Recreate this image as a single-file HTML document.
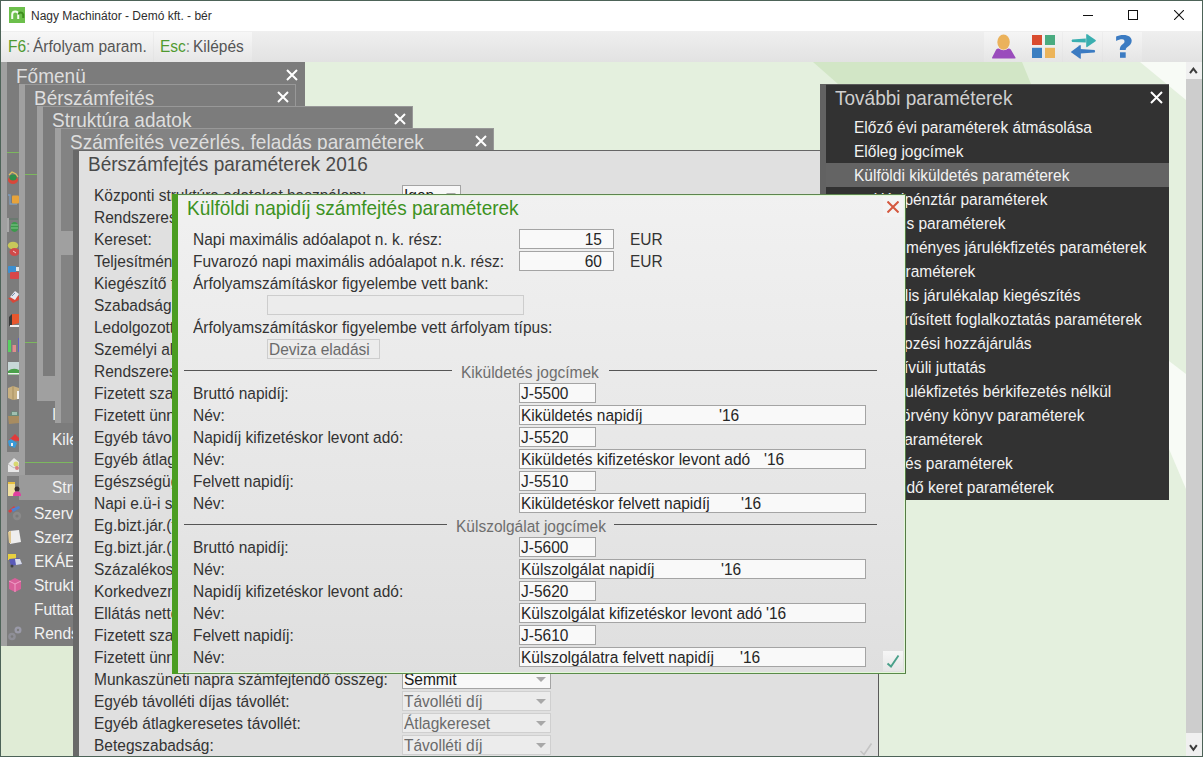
<!DOCTYPE html>
<html><head><meta charset="utf-8"><style>
html,body{margin:0;padding:0;}
body{width:1203px;height:757px;overflow:hidden;position:relative;background:#4d6358;font-family:"Liberation Sans", sans-serif;}
div,span,svg{position:absolute;}
.t{line-height:1;white-space:pre;}
.t span{position:static;}
</style></head><body>

<div style="left:1px;top:1px;width:1201px;height:30px;background:#ffffff"></div>
<svg style="left:9px;top:7px" width="16" height="16" viewBox="0 0 16 16"><rect x="0" y="0" width="16" height="16" fill="#6cbf4b"/><path d="M3.2 12V7.5a3 3 0 0 1 6 0V12" fill="none" stroke="#f4fbef" stroke-width="2"/><path d="M9.2 7.5a2.6 2.6 0 0 1 5 0V11" fill="none" stroke="#3f8f1f" stroke-width="2"/></svg>
<span class="t" style="left:31px;top:10px;font-size:12px;color:#2e2e2e;">Nagy Machinátor - Demó kft. - bér</span>
<div style="left:1083px;top:15px;width:10px;height:1px;background:#111"></div>
<div style="left:1128px;top:10px;width:8px;height:8px;border:1px solid #111"></div>
<svg style="left:1174px;top:10px" width="10" height="10" viewBox="0 0 10 10"><path d="M0 0L10 10M10 0L0 10" stroke="#111" stroke-width="1.1"/></svg>
<div style="left:1px;top:31px;width:1201px;height:31px;background:linear-gradient(#efefef,#e2e2e2)"></div>
<div style="left:1px;top:32px;width:152px;height:30px;background:linear-gradient(#f7f7f7,#e6e6e6)"></div>
<div style="left:154px;top:32px;width:98px;height:30px;background:linear-gradient(#f7f7f7,#e6e6e6)"></div>
<span class="t" style="left:8px;top:39px;font-size:15.5px;color:#555;transform:scaleY(1.12);transform-origin:0 13px;"><span style="color:#4f9a30">F6</span><span style="color:#888">:</span></span>
<span class="t" style="left:33px;top:39px;font-size:15.5px;color:#555;transform:scaleY(1.12);transform-origin:0 13px;">Árfolyam param.</span>
<span class="t" style="left:160px;top:39px;font-size:15.5px;color:#555;transform:scaleY(1.12);transform-origin:0 13px;"><span style="color:#4f9a30">Esc</span><span style="color:#888">:</span></span>
<span class="t" style="left:193px;top:39px;font-size:15.5px;color:#555;transform:scaleY(1.12);transform-origin:0 13px;">Kilépés</span>
<div style="left:984px;top:32px;width:39px;height:30px;background:linear-gradient(#f5f5f5,#e5e5e5)"></div>
<div style="left:1023px;top:32px;width:39px;height:30px;background:linear-gradient(#f5f5f5,#e5e5e5)"></div>
<div style="left:1063px;top:32px;width:39px;height:30px;background:linear-gradient(#f5f5f5,#e5e5e5)"></div>
<div style="left:1103px;top:32px;width:39px;height:30px;background:linear-gradient(#f5f5f5,#e5e5e5)"></div>
<svg style="left:984px;top:32px" width="39" height="30" viewBox="0 0 39 30"><path d="M8 25.8 L12.2 17.6 Q13 16.5 15 16.6 L24 16.6 Q26 16.5 26.8 17.6 L31.6 25.8 Q31.8 26.4 31 26.4 L8.6 26.4 Q7.8 26.4 8 25.8 Z" fill="#9a4cbc"/><ellipse cx="19.55" cy="10.05" rx="7.0" ry="8.3" fill="#f2f2f2"/><ellipse cx="19.55" cy="10.05" rx="6.25" ry="7.6" fill="#ebb25b"/></svg>
<svg style="left:1023px;top:32px" width="40" height="30" viewBox="0 0 40 30"><rect x="9" y="3" width="10" height="10" fill="#d94c2f"/><rect x="22" y="3" width="10" height="10" fill="#4aab80"/><rect x="9" y="15.8" width="10" height="10.2" fill="#3b7fc1"/><rect x="22" y="15.8" width="10" height="10.2" fill="#ecb45a"/></svg>
<svg style="left:1063px;top:32px" width="40" height="30" viewBox="0 0 40 30"><path d="M9.2 7.5 L22.8 6.6 L22.8 10.4 L9.2 10 Q7.8 8.8 9.2 7.5 Z" fill="#3aafb0"/><path d="M23.2 2.6 Q23.4 1.8 24.2 2.3 L32.6 8 Q33.2 8.6 32.6 9.2 L24.2 15 Q23.4 15.5 23.2 14.6 Z" fill="#3aafb0"/><path d="M17.2 17 L31.6 18 Q32.6 19.2 31.6 20.4 L17.2 21.6 Z" fill="#3b7bc2"/><path d="M17.8 13.6 Q17.6 12.8 16.8 13.3 L8.4 19.4 Q7.8 20 8.4 20.6 L16.8 26.6 Q17.6 27.1 17.8 26.2 Z" fill="#3b7bc2"/></svg>
<svg style="left:1103px;top:32px" width="40" height="30" viewBox="0 0 40 30"><path d="M13.1 4.6 C15 3.5 17.5 3 20.5 3 C25.5 3 28.7 5.3 28.7 8.8 C28.7 12 26.5 13.5 24.8 14.7 C23.3 15.8 22.7 16.5 22.7 17.9 L16.8 17.9 C16.8 15.2 17.8 13.6 19.6 12.2 C20.9 11.2 21.5 10.5 21.5 9.4 C21.5 8.1 20.6 7.3 19.2 7.3 C17.3 7.3 15 8 13.1 8.9 Z" fill="#3b7bc2"/><rect x="17" y="20.3" width="5.7" height="5.5" fill="#3b7bc2"/></svg>
<div style="left:1px;top:62px;width:1185px;height:694px;background:#e4f0de"></div>
<svg style="left:1px;top:62px" width="1185" height="694" viewBox="1 62 1185 694"><polygon points="813,62 1022,62 1031,84 1100,300 900,300 838,84" fill="#d2e6c6"/><polygon points="1140,62 1186,62 1186,100" fill="#f8fbf6"/><polygon points="1169,361 1186,374 1186,489 1169,449" fill="#f8fbf6"/><rect x="1" y="646" width="72" height="110" fill="#e0ecd6"/></svg>
<div style="left:1px;top:62px;width:304px;height:584px;background:#7c7c7c"></div>
<div style="left:1px;top:62px;width:6px;height:584px;background:#a0a0a0"></div>
<span class="t" style="left:16px;top:67px;font-size:19px;color:#dedede;transform:scaleY(1.06);transform-origin:0 18px;">Főmenü</span>
<svg style="left:286.0px;top:69.0px" width="12" height="12" viewBox="0 0 12 12"><path d="M1 1L11 11M11 1L1 11" stroke="#ffffff" stroke-width="2" stroke-linecap="butt"/></svg>
<div style="left:7px;top:152px;width:12px;height:1px;background:#7cb85e"></div>
<div style="left:7px;top:452px;width:12px;height:24px;background:#a0a0a0"></div>
<div style="left:19px;top:475px;width:60px;height:25px;background:#9a9a9a"></div>
<span class="t" style="left:52px;top:480px;font-size:15.5px;color:#f2f2f2;transform:scaleY(1.12);transform-origin:0 13px;">Struktúra adatok</span>
<span class="t" style="left:34px;top:506px;font-size:15.5px;color:#f2f2f2;transform:scaleY(1.12);transform-origin:0 13px;">Szervizfunkciók</span>
<span class="t" style="left:34px;top:530px;font-size:15.5px;color:#f2f2f2;transform:scaleY(1.12);transform-origin:0 13px;">Szerződések</span>
<span class="t" style="left:34px;top:554px;font-size:15.5px;color:#f2f2f2;transform:scaleY(1.12);transform-origin:0 13px;">EKÁER</span>
<span class="t" style="left:34px;top:578px;font-size:15.5px;color:#f2f2f2;transform:scaleY(1.12);transform-origin:0 13px;">Struktúra</span>
<span class="t" style="left:34px;top:602px;font-size:15.5px;color:#f2f2f2;transform:scaleY(1.12);transform-origin:0 13px;">Futtatások</span>
<span class="t" style="left:34px;top:626px;font-size:15.5px;color:#f2f2f2;transform:scaleY(1.12);transform-origin:0 13px;">Rendszer</span>
<svg style="left:7px;top:169px" width="14" height="16" viewBox="0 0 14 16"><ellipse cx="6" cy="11" rx="5" ry="4" fill="#d9473a"/><ellipse cx="6" cy="8.5" rx="3.6" ry="3" fill="#2f8f4a"/><path d="M2 6 L5 3 L9 5 L11 8" stroke="#e0c060" stroke-width="1.2" fill="none"/></svg>
<svg style="left:7px;top:193px" width="14" height="16" viewBox="0 0 14 16"><path d="M1 2 L3 2 L3 11 L10 11" stroke="#7d9cbc" stroke-width="1.3" fill="none"/><rect x="5" y="2.5" width="7" height="8" fill="#e8a33a" rx="1"/></svg>
<svg style="left:7px;top:217px" width="14" height="16" viewBox="0 0 14 16"><rect x="0.5" y="1" width="1" height="14" fill="#d8d8d8"/><rect x="2" y="1" width="9" height="2" fill="#6a7a70"/><ellipse cx="7.5" cy="10" rx="4" ry="5" fill="#3c9a4c"/><path d="M4 8 H11 M4 11 H11" stroke="#9ad0a0" stroke-width="0.8"/></svg>
<svg style="left:7px;top:241px" width="14" height="16" viewBox="0 0 14 16"><ellipse cx="6" cy="4.5" rx="5.2" ry="3.8" fill="#c8c85a"/><ellipse cx="7.5" cy="11" rx="5" ry="4" fill="#d04a4a"/><path d="M6 10 L9 12" stroke="#f0d0d0" stroke-width="1"/></svg>
<svg style="left:7px;top:265px" width="14" height="16" viewBox="0 0 14 16"><rect x="1" y="1" width="8" height="7" fill="#3d8fd0" rx="1"/><rect x="3" y="7" width="9" height="7" fill="#d8474a" rx="1"/><rect x="9" y="2" width="3" height="4" fill="#e8e8e8"/></svg>
<svg style="left:7px;top:289px" width="14" height="16" viewBox="0 0 14 16"><path d="M1 9 L6 14 L12 11 L12 7 Z" fill="#d8483a"/><path d="M3 8 L8 2 L12 5 L8 11 Z" fill="#e8e8f0"/><path d="M5 7 L8 4" stroke="#7090b0" stroke-width="1"/></svg>
<svg style="left:7px;top:313px" width="14" height="16" viewBox="0 0 14 16"><path d="M5 1 L12 1 L12 10 L5 12 Z" fill="#e8572e"/><path d="M2 4 L5 1 L5 12 L2 13 Z" fill="#3a3a3a"/><rect x="3" y="12" width="9" height="2" fill="#f0f0f0"/></svg>
<svg style="left:7px;top:337px" width="14" height="16" viewBox="0 0 14 16"><rect x="1" y="3" width="3" height="12" fill="#58d060"/><rect x="5.5" y="8" width="3.5" height="7" fill="#e08c8c"/><rect x="11" y="1" width="1" height="14" fill="#6060c0"/></svg>
<svg style="left:7px;top:361px" width="14" height="16" viewBox="0 0 14 16"><rect x="1" y="1" width="11" height="13" fill="#c8d8d8"/><path d="M1 10 Q6 6 12 9 L12 14 L1 14 Z" fill="#4aa04a"/><rect x="1" y="12" width="11" height="1.5" fill="#f0f0f0"/></svg>
<svg style="left:7px;top:385px" width="14" height="16" viewBox="0 0 14 16"><path d="M1 3 L6 1 L12 3 L12 14 L6 15 L1 13 Z" fill="#c8b080"/><path d="M6 1 L6 15" stroke="#a89060" stroke-width="1"/><rect x="10" y="6" width="2" height="8" fill="#f4f4f4"/></svg>
<svg style="left:7px;top:409px" width="14" height="16" viewBox="0 0 14 16"><path d="M1 7 L12 7 L12 14 L2 15 Z" fill="#a88c60"/><path d="M2 7 L5 2 L11 3 L12 7 Z" fill="#6a8a7a"/><rect x="5" y="3" width="5" height="3" fill="#a0c0b0"/></svg>
<svg style="left:7px;top:433px" width="14" height="16" viewBox="0 0 14 16"><path d="M2 7 L8 1 L12 5 L12 8 Z" fill="#e23a3a"/><path d="M1 8 L4 6 L10 10 L8 15 L2 13 Z" fill="#3a9ad8"/><rect x="4" y="10" width="2" height="3" fill="#f0f0f0"/></svg>
<svg style="left:7px;top:457px" width="14" height="16" viewBox="0 0 14 16"><path d="M1 7 L7 1 L12 5 L12 15 L1 15 Z" fill="#e8e8e8"/><path d="M1 7 L7 11 L12 8" stroke="#b0b0b0" fill="none" stroke-width="0.8"/><circle cx="9" cy="7" r="2.5" fill="#d8d870"/><circle cx="10" cy="11" r="2" fill="#d88080"/></svg>
<svg style="left:7px;top:481px" width="14" height="16" viewBox="0 0 14 16"><rect x="1" y="2" width="7" height="13" fill="#f0e0a0"/><rect x="1" y="1" width="7" height="2" fill="#e8c040"/><circle cx="10" cy="8" r="2.5" fill="#3a3030"/><path d="M6 15 Q6 10 10 10.5 Q14 10 14 15 Z" fill="#e040a0"/></svg>
<svg style="left:7px;top:505px" width="16" height="17" viewBox="0 0 16 17"><path d="M1 6 L7 1 L9 3 L3 8 Z" fill="#d84040"/><path d="M4 4 L12 1 L13 3 L6 7 Z" fill="#5080d0"/><circle cx="10" cy="11" r="4.2" fill="#8a8a8a"/><circle cx="10" cy="11" r="1.6" fill="#7a7a7a"/></svg>
<svg style="left:7px;top:529px" width="16" height="17" viewBox="0 0 16 17"><path d="M2 2 L12 1 L14 13 L3 15 Z" fill="#eeeeee"/><path d="M1 3 L4 2 L4 14 L2 14 Z" fill="#e0c890"/></svg>
<svg style="left:7px;top:553px" width="16" height="17" viewBox="0 0 16 17"><rect x="1" y="1" width="8" height="6" fill="#e8d040"/><path d="M2 6 L12 5 L15 11 L4 13 Z" fill="#5a5ab8"/><path d="M8 6 L13 6 L15 11 L9 12 Z" fill="#d8dce8"/><circle cx="5" cy="13" r="1.5" fill="#404040"/></svg>
<svg style="left:7px;top:577px" width="16" height="17" viewBox="0 0 16 17"><path d="M2 4 L8 1 L14 4 L14 12 L8 15 L2 12 Z" fill="#d8609a"/><path d="M2 4 L8 7 L14 4 M8 7 L8 15" stroke="#f0a0c8" stroke-width="1" fill="none"/></svg>
<svg style="left:7px;top:625px" width="16" height="17" viewBox="0 0 16 17"><circle cx="5" cy="11.5" r="3.8" fill="#8e8e96"/><circle cx="5" cy="11.5" r="1.3" fill="#7a7a7a"/><circle cx="11" cy="5" r="3.5" fill="#9a9aa8"/><circle cx="11" cy="5" r="1.2" fill="#7a7a7a"/></svg>
<div style="left:19px;top:84px;width:277px;height:391px;background:#7c7c7c"></div>
<div style="left:25px;top:84px;width:271px;height:1px;background:#989898"></div>
<div style="left:295px;top:84px;width:1px;height:391px;background:#989898"></div>
<div style="left:19px;top:84px;width:6px;height:391px;background:#a0a0a0"></div>
<span class="t" style="left:34px;top:89px;font-size:19px;color:#dedede;transform:scaleY(1.06);transform-origin:0 18px;">Bérszámfeités</span>
<svg style="left:277.0px;top:91.0px" width="12" height="12" viewBox="0 0 12 12"><path d="M1 1L11 11M11 1L1 11" stroke="#ffffff" stroke-width="2" stroke-linecap="butt"/></svg>
<div style="left:25px;top:174px;width:12px;height:1px;background:#7cb85e"></div>
<div style="left:25px;top:342px;width:12px;height:1px;background:#7cb85e"></div>
<span class="t" style="left:52px;top:407px;font-size:15.5px;color:#f2f2f2;transform:scaleY(1.12);transform-origin:0 13px;">Import</span>
<span class="t" style="left:52px;top:432px;font-size:15.5px;color:#f2f2f2;transform:scaleY(1.12);transform-origin:0 13px;">Kilépés</span>
<div style="left:25px;top:462px;width:60px;height:1px;background:#7cb85e"></div>
<div style="left:37px;top:106px;width:376px;height:295px;background:#7c7c7c"></div>
<div style="left:43px;top:106px;width:370px;height:1px;background:#989898"></div>
<div style="left:412px;top:106px;width:1px;height:295px;background:#989898"></div>
<div style="left:37px;top:106px;width:6px;height:295px;background:#a0a0a0"></div>
<div style="left:37px;top:376px;width:18px;height:25px;background:#a0a0a0"></div>
<span class="t" style="left:52px;top:111px;font-size:19px;color:#dedede;transform:scaleY(1.06);transform-origin:0 18px;">Struktúra adatok</span>
<svg style="left:394.0px;top:113.0px" width="12" height="12" viewBox="0 0 12 12"><path d="M1 1L11 11M11 1L1 11" stroke="#ffffff" stroke-width="2" stroke-linecap="butt"/></svg>
<div style="left:55px;top:128px;width:439px;height:295px;background:#838383"></div>
<div style="left:61px;top:128px;width:433px;height:1px;background:#989898"></div>
<div style="left:493px;top:128px;width:1px;height:295px;background:#989898"></div>
<div style="left:55px;top:128px;width:6px;height:295px;background:#a0a0a0"></div>
<div style="left:61px;top:231px;width:18px;height:24px;background:#a0a0a0"></div>
<span class="t" style="left:70px;top:133px;font-size:19px;color:#dedede;transform:scaleY(1.06);transform-origin:0 18px;">Számfeités vezérlés, feladás paraméterek</span>
<svg style="left:475.0px;top:135.0px" width="12" height="12" viewBox="0 0 12 12"><path d="M1 1L11 11M11 1L1 11" stroke="#ffffff" stroke-width="2" stroke-linecap="butt"/></svg>
<div style="left:73px;top:150px;width:806px;height:606px;background:#e0e0e0"></div>
<div style="left:73px;top:150px;width:6px;height:606px;background:#696969"></div>
<div style="left:79px;top:150px;width:799px;height:1px;background:#666"></div>
<div style="left:878px;top:150px;width:1px;height:606px;background:#5a5a5a"></div>
<span class="t" style="left:88px;top:155px;font-size:19px;color:#4a4a4a;transform:scaleY(1.06);transform-origin:0 18px;">Bérszámfejtés paraméterek 2016</span>
<span class="t" style="left:94px;top:188px;font-size:15.5px;color:#333333;transform:scaleY(1.12);transform-origin:0 13px;">Központi struktúra adatokat használom:</span>
<span class="t" style="left:94px;top:210px;font-size:15.5px;color:#333333;transform:scaleY(1.12);transform-origin:0 13px;">Rendszeres jövedelem:</span>
<span class="t" style="left:94px;top:232px;font-size:15.5px;color:#333333;transform:scaleY(1.12);transform-origin:0 13px;">Kereset:</span>
<span class="t" style="left:94px;top:254px;font-size:15.5px;color:#333333;transform:scaleY(1.12);transform-origin:0 13px;">Teljesítménybér:</span>
<span class="t" style="left:94px;top:276px;font-size:15.5px;color:#333333;transform:scaleY(1.12);transform-origin:0 13px;">Kiegészítő fizetés:</span>
<span class="t" style="left:94px;top:298px;font-size:15.5px;color:#333333;transform:scaleY(1.12);transform-origin:0 13px;">Szabadság:</span>
<span class="t" style="left:94px;top:320px;font-size:15.5px;color:#333333;transform:scaleY(1.12);transform-origin:0 13px;">Ledolgozott idő:</span>
<span class="t" style="left:94px;top:342px;font-size:15.5px;color:#333333;transform:scaleY(1.12);transform-origin:0 13px;">Személyi alapbér:</span>
<span class="t" style="left:94px;top:364px;font-size:15.5px;color:#333333;transform:scaleY(1.12);transform-origin:0 13px;">Rendszeres pótlék:</span>
<span class="t" style="left:94px;top:386px;font-size:15.5px;color:#333333;transform:scaleY(1.12);transform-origin:0 13px;">Fizetett szabadság:</span>
<span class="t" style="left:94px;top:408px;font-size:15.5px;color:#333333;transform:scaleY(1.12);transform-origin:0 13px;">Fizetett ünnep:</span>
<span class="t" style="left:94px;top:430px;font-size:15.5px;color:#333333;transform:scaleY(1.12);transform-origin:0 13px;">Egyéb távollét:</span>
<span class="t" style="left:94px;top:452px;font-size:15.5px;color:#333333;transform:scaleY(1.12);transform-origin:0 13px;">Egyéb átlagkereset:</span>
<span class="t" style="left:94px;top:474px;font-size:15.5px;color:#333333;transform:scaleY(1.12);transform-origin:0 13px;">Egészségügyi szolgáltatási járulék:</span>
<span class="t" style="left:94px;top:496px;font-size:15.5px;color:#333333;transform:scaleY(1.12);transform-origin:0 13px;">Napi e.ü-i szolgáltatási járulék:</span>
<span class="t" style="left:94px;top:518px;font-size:15.5px;color:#333333;transform:scaleY(1.12);transform-origin:0 13px;">Eg.bizt.jár.(term.):</span>
<span class="t" style="left:94px;top:540px;font-size:15.5px;color:#333333;transform:scaleY(1.12);transform-origin:0 13px;">Eg.bizt.jár.(pénzb.):</span>
<span class="t" style="left:94px;top:562px;font-size:15.5px;color:#333333;transform:scaleY(1.12);transform-origin:0 13px;">Százalékos adó:</span>
<span class="t" style="left:94px;top:584px;font-size:15.5px;color:#333333;transform:scaleY(1.12);transform-origin:0 13px;">Korkedvezmény:</span>
<span class="t" style="left:94px;top:606px;font-size:15.5px;color:#333333;transform:scaleY(1.12);transform-origin:0 13px;">Ellátás nettó:</span>
<span class="t" style="left:94px;top:628px;font-size:15.5px;color:#333333;transform:scaleY(1.12);transform-origin:0 13px;">Fizetett szabadság:</span>
<span class="t" style="left:94px;top:650px;font-size:15.5px;color:#333333;transform:scaleY(1.12);transform-origin:0 13px;">Fizetett ünnep:</span>
<span class="t" style="left:94px;top:672px;font-size:15.5px;color:#333333;transform:scaleY(1.12);transform-origin:0 13px;">Munkaszüneti napra számfejtendő összeg:</span>
<span class="t" style="left:94px;top:694px;font-size:15.5px;color:#333333;transform:scaleY(1.12);transform-origin:0 13px;">Egyéb távolléti díjas távollét:</span>
<span class="t" style="left:94px;top:716px;font-size:15.5px;color:#333333;transform:scaleY(1.12);transform-origin:0 13px;">Egyéb átlagkeresetes távollét:</span>
<span class="t" style="left:94px;top:738px;font-size:15.5px;color:#333333;transform:scaleY(1.12);transform-origin:0 13px;">Betegszabadság:</span>
<div style="left:402px;top:185px;width:57px;height:18px;background:#f8f8f8;border:1px solid #a4a4a4"></div>
<span class="t" style="left:404px;top:188px;font-size:15.5px;color:#1a1a1a;transform:scaleY(1.12);transform-origin:0 13px;">Igen</span>
<svg style="left:446px;top:193px" width="10" height="5" viewBox="0 0 10 5"><path d="M0 0H10L5 5Z" fill="#a8a8a8"/></svg>
<div style="left:402px;top:669px;width:147px;height:18px;background:#f8f8f8;border:1px solid #a4a4a4"></div>
<span class="t" style="left:404px;top:672px;font-size:15.5px;color:#1a1a1a;transform:scaleY(1.12);transform-origin:0 13px;">Semmit</span>
<svg style="left:536px;top:677px" width="10" height="5" viewBox="0 0 10 5"><path d="M0 0H10L5 5Z" fill="#a8a8a8"/></svg>
<div style="left:402px;top:691px;width:147px;height:18px;background:#ececec;border:1px solid #cfcfcf"></div>
<span class="t" style="left:404px;top:694px;font-size:15.5px;color:#6a6a6a;transform:scaleY(1.12);transform-origin:0 13px;">Távolléti díj</span>
<svg style="left:536px;top:699px" width="10" height="5" viewBox="0 0 10 5"><path d="M0 0H10L5 5Z" fill="#a8a8a8"/></svg>
<div style="left:402px;top:713px;width:147px;height:18px;background:#ececec;border:1px solid #cfcfcf"></div>
<span class="t" style="left:404px;top:716px;font-size:15.5px;color:#6a6a6a;transform:scaleY(1.12);transform-origin:0 13px;">Átlagkereset</span>
<svg style="left:536px;top:721px" width="10" height="5" viewBox="0 0 10 5"><path d="M0 0H10L5 5Z" fill="#a8a8a8"/></svg>
<div style="left:402px;top:735px;width:147px;height:18px;background:#ececec;border:1px solid #cfcfcf"></div>
<span class="t" style="left:404px;top:738px;font-size:15.5px;color:#6a6a6a;transform:scaleY(1.12);transform-origin:0 13px;">Távolléti díj</span>
<svg style="left:536px;top:743px" width="10" height="5" viewBox="0 0 10 5"><path d="M0 0H10L5 5Z" fill="#a8a8a8"/></svg>
<svg style="left:859px;top:742px" width="14" height="14" viewBox="0 0 14 14"><path d="M1.5 9L5 12.5L12.5 1.5" fill="none" stroke="#c4c4c4" stroke-width="1.6"/></svg>
<div style="left:820px;top:84px;width:349px;height:416px;background:#323232"></div>
<div style="left:820px;top:84px;width:6px;height:416px;background:#626262"></div>
<div style="left:826px;top:163px;width:343px;height:24px;background:#646464"></div>
<span class="t" style="left:835px;top:89px;font-size:19px;color:#cfcfcf;transform:scaleY(1.06);transform-origin:0 18px;">További paraméterek</span>
<svg style="left:1149.5px;top:90.5px" width="13" height="13" viewBox="0 0 13 13"><path d="M1 1L12 12M12 1L1 12" stroke="#ffffff" stroke-width="2" stroke-linecap="butt"/></svg>
<div style="left:826px;top:84px;width:343px;height:1px;background:#5a5a5a"></div>
<span class="t" style="left:854px;top:120px;font-size:15.5px;color:#f2f2f2;transform:scaleY(1.12);transform-origin:0 13px;">Előző évi paraméterek átmásolása</span>
<span class="t" style="left:854px;top:144px;font-size:15.5px;color:#f2f2f2;transform:scaleY(1.12);transform-origin:0 13px;">Előleg jogcímek</span>
<span class="t" style="left:854px;top:168px;font-size:15.5px;color:#f2f2f2;transform:scaleY(1.12);transform-origin:0 13px;">Külföldi kiküldetés paraméterek</span>
<span class="t" style="right:155.6px;top:192px;font-size:15.5px;color:#f2f2f2;transform:scaleY(1.12);transform-origin:0 13px">Házipénztár paraméterek</span>
<span class="t" style="right:197.5px;top:216px;font-size:15.5px;color:#f2f2f2;transform:scaleY(1.12);transform-origin:0 13px">Önkéntes paraméterek</span>
<span class="t" style="right:56.6px;top:240px;font-size:15.5px;color:#f2f2f2;transform:scaleY(1.12);transform-origin:0 13px">Kedvezményes járulékfizetés paraméterek</span>
<span class="t" style="right:227.7px;top:264px;font-size:15.5px;color:#f2f2f2;transform:scaleY(1.12);transform-origin:0 13px">EKHO paraméterek</span>
<span class="t" style="right:122.5px;top:288px;font-size:15.5px;color:#f2f2f2;transform:scaleY(1.12);transform-origin:0 13px">Minimális járulékalap kiegészítés</span>
<span class="t" style="right:61.2px;top:312px;font-size:15.5px;color:#f2f2f2;transform:scaleY(1.12);transform-origin:0 13px">Egyszerűsített foglalkoztatás paraméterek</span>
<span class="t" style="right:171.4px;top:336px;font-size:15.5px;color:#f2f2f2;transform:scaleY(1.12);transform-origin:0 13px">Szakképzési hozzájárulás</span>
<span class="t" style="right:217.2px;top:360px;font-size:15.5px;color:#f2f2f2;transform:scaleY(1.12);transform-origin:0 13px">Béren kívüli juttatás</span>
<span class="t" style="right:91.8px;top:384px;font-size:15.5px;color:#f2f2f2;transform:scaleY(1.12);transform-origin:0 13px">Járulékfizetés bérkifezetés nélkül</span>
<span class="t" style="right:118.5px;top:408px;font-size:15.5px;color:#f2f2f2;transform:scaleY(1.12);transform-origin:0 13px">Munka törvény könyv paraméterek</span>
<span class="t" style="right:220.4px;top:432px;font-size:15.5px;color:#f2f2f2;transform:scaleY(1.12);transform-origin:0 13px">Egyéb paraméterek</span>
<span class="t" style="right:190.2px;top:456px;font-size:15.5px;color:#f2f2f2;transform:scaleY(1.12);transform-origin:0 13px">Kerekítés paraméterek</span>
<span class="t" style="right:149.2px;top:480px;font-size:15.5px;color:#f2f2f2;transform:scaleY(1.12);transform-origin:0 13px">Munkaidő keret paraméterek</span>
<div style="left:172px;top:194px;width:734px;height:480px;background:linear-gradient(#f1f1f1,#dfdfdf)"></div>
<div style="left:172px;top:195px;width:733px;height:1px;background:#e2f8d8"></div>
<div style="left:904px;top:195px;width:1px;height:478px;background:#e2f8d8"></div>
<div style="left:172px;top:672px;width:733px;height:1px;background:#e2f8d8"></div>
<div style="left:172px;top:194px;width:734px;height:1px;background:#5e8450"></div>
<div style="left:905px;top:194px;width:1px;height:480px;background:#557a45"></div>
<div style="left:172px;top:673px;width:734px;height:1px;background:#5a8a4a"></div>
<div style="left:172px;top:194px;width:6px;height:480px;background:#4b9d22"></div>
<span class="t" style="left:187px;top:199px;font-size:19px;color:#3c9222;transform:scaleY(1.06);transform-origin:0 18px;">Külföldi napidíj számfejtés paraméterek</span>
<div style="left:883px;top:196px;width:20px;height:21px;background:#f3f3f3"></div>
<svg style="left:887px;top:201px" width="12" height="12" viewBox="0 0 12 12"><path d="M0.5 0.5L11.5 11.5M11.5 0.5L0.5 11.5" stroke="#d4583f" stroke-width="2"/></svg>
<span class="t" style="left:193px;top:232px;font-size:15.5px;color:#333333;transform:scaleY(1.12);transform-origin:0 13px;">Napi maximális adóalapot n. k. rész:</span>
<div style="left:519px;top:229px;width:93px;height:18px;background:#f9f9f9;border:1px solid #a4a4a4"></div>
<span class="t" style="left:519px;width:83px;text-align:right;top:232px;font-size:15.5px;color:#262626;transform:scaleY(1.12);transform-origin:0 13px">15</span>
<span class="t" style="left:630px;top:232px;font-size:15.5px;color:#333333;transform:scaleY(1.12);transform-origin:0 13px;">EUR</span>
<span class="t" style="left:193px;top:254px;font-size:15.5px;color:#333333;transform:scaleY(1.12);transform-origin:0 13px;">Fuvarozó napi maximális adóalapot n.k. rész:</span>
<div style="left:519px;top:251px;width:93px;height:18px;background:#f9f9f9;border:1px solid #a4a4a4"></div>
<span class="t" style="left:519px;width:83px;text-align:right;top:254px;font-size:15.5px;color:#262626;transform:scaleY(1.12);transform-origin:0 13px">60</span>
<span class="t" style="left:630px;top:254px;font-size:15.5px;color:#333333;transform:scaleY(1.12);transform-origin:0 13px;">EUR</span>
<span class="t" style="left:193px;top:276px;font-size:15.5px;color:#333333;transform:scaleY(1.12);transform-origin:0 13px;">Árfolyamszámításkor figyelembe vett bank:</span>
<div style="left:267px;top:295px;width:255px;height:18px;background:#ececec;border:1px solid #cdcdcd"></div>
<span class="t" style="left:193px;top:320px;font-size:15.5px;color:#333333;transform:scaleY(1.12);transform-origin:0 13px;">Árfolyamszámításkor figyelembe vett árfolyam típus:</span>
<div style="left:267px;top:339px;width:111px;height:18px;background:#ececec;border:1px solid #cdcdcd"></div>
<span class="t" style="left:269px;top:342px;font-size:15.5px;color:#6a6a6a;transform:scaleY(1.12);transform-origin:0 13px;">Deviza eladási</span>
<div style="left:184px;top:370px;width:268px;height:1px;background:#555"></div>
<span class="t" style="left:461px;top:365px;font-size:15.5px;color:#6e6e6e;transform:scaleY(1.12);transform-origin:0 13px;">Kiküldetés jogcímek</span>
<div style="left:609px;top:370px;width:268px;height:1px;background:#555"></div>
<span class="t" style="left:193px;top:386px;font-size:15.5px;color:#333333;transform:scaleY(1.12);transform-origin:0 13px;">Bruttó napidíj:</span>
<div style="left:519px;top:383px;width:75px;height:18px;background:#f9f9f9;border:1px solid #a4a4a4"></div>
<span class="t" style="left:521px;top:386px;font-size:15.5px;color:#262626;transform:scaleY(1.12);transform-origin:0 13px;">J-5500</span>
<span class="t" style="left:193px;top:408px;font-size:15.5px;color:#333333;transform:scaleY(1.12);transform-origin:0 13px;">Név:</span>
<div style="left:519px;top:405px;width:345px;height:18px;background:#f9f9f9;border:1px solid #a4a4a4"></div>
<span class="t" style="left:521px;top:408px;font-size:15.5px;color:#262626;transform:scaleY(1.12);transform-origin:0 13px;">Kiküldetés napidíj</span>
<span class="t" style="left:719px;top:408px;font-size:15.5px;color:#262626;transform:scaleY(1.12);transform-origin:0 13px;">'16</span>
<span class="t" style="left:193px;top:430px;font-size:15.5px;color:#333333;transform:scaleY(1.12);transform-origin:0 13px;">Napidíj kifizetéskor levont adó:</span>
<div style="left:519px;top:427px;width:75px;height:18px;background:#f9f9f9;border:1px solid #a4a4a4"></div>
<span class="t" style="left:521px;top:430px;font-size:15.5px;color:#262626;transform:scaleY(1.12);transform-origin:0 13px;">J-5520</span>
<span class="t" style="left:193px;top:452px;font-size:15.5px;color:#333333;transform:scaleY(1.12);transform-origin:0 13px;">Név:</span>
<div style="left:519px;top:449px;width:345px;height:18px;background:#f9f9f9;border:1px solid #a4a4a4"></div>
<span class="t" style="left:521px;top:452px;font-size:15.5px;color:#262626;transform:scaleY(1.12);transform-origin:0 13px;">Kiküldetés kifizetéskor levont adó</span>
<span class="t" style="left:764px;top:452px;font-size:15.5px;color:#262626;transform:scaleY(1.12);transform-origin:0 13px;">'16</span>
<span class="t" style="left:193px;top:474px;font-size:15.5px;color:#333333;transform:scaleY(1.12);transform-origin:0 13px;">Felvett napidíj:</span>
<div style="left:519px;top:471px;width:75px;height:18px;background:#f9f9f9;border:1px solid #a4a4a4"></div>
<span class="t" style="left:521px;top:474px;font-size:15.5px;color:#262626;transform:scaleY(1.12);transform-origin:0 13px;">J-5510</span>
<span class="t" style="left:193px;top:496px;font-size:15.5px;color:#333333;transform:scaleY(1.12);transform-origin:0 13px;">Név:</span>
<div style="left:519px;top:493px;width:345px;height:18px;background:#f9f9f9;border:1px solid #a4a4a4"></div>
<span class="t" style="left:521px;top:496px;font-size:15.5px;color:#262626;transform:scaleY(1.12);transform-origin:0 13px;">Kiküldetéskor felvett napidíj</span>
<span class="t" style="left:741px;top:496px;font-size:15.5px;color:#262626;transform:scaleY(1.12);transform-origin:0 13px;">'16</span>
<div style="left:184px;top:524px;width:263px;height:1px;background:#555"></div>
<span class="t" style="left:456px;top:519px;font-size:15.5px;color:#6e6e6e;transform:scaleY(1.12);transform-origin:0 13px;">Külszolgálat jogcímek</span>
<div style="left:614px;top:524px;width:263px;height:1px;background:#555"></div>
<span class="t" style="left:193px;top:540px;font-size:15.5px;color:#333333;transform:scaleY(1.12);transform-origin:0 13px;">Bruttó napidíj:</span>
<div style="left:519px;top:537px;width:75px;height:18px;background:#f9f9f9;border:1px solid #a4a4a4"></div>
<span class="t" style="left:521px;top:540px;font-size:15.5px;color:#262626;transform:scaleY(1.12);transform-origin:0 13px;">J-5600</span>
<span class="t" style="left:193px;top:562px;font-size:15.5px;color:#333333;transform:scaleY(1.12);transform-origin:0 13px;">Név:</span>
<div style="left:519px;top:559px;width:345px;height:18px;background:#f9f9f9;border:1px solid #a4a4a4"></div>
<span class="t" style="left:521px;top:562px;font-size:15.5px;color:#262626;transform:scaleY(1.12);transform-origin:0 13px;">Külszolgálat napidíj</span>
<span class="t" style="left:721px;top:562px;font-size:15.5px;color:#262626;transform:scaleY(1.12);transform-origin:0 13px;">'16</span>
<span class="t" style="left:193px;top:584px;font-size:15.5px;color:#333333;transform:scaleY(1.12);transform-origin:0 13px;">Napidíj kifizetéskor levont adó:</span>
<div style="left:519px;top:581px;width:75px;height:18px;background:#f9f9f9;border:1px solid #a4a4a4"></div>
<span class="t" style="left:521px;top:584px;font-size:15.5px;color:#262626;transform:scaleY(1.12);transform-origin:0 13px;">J-5620</span>
<span class="t" style="left:193px;top:606px;font-size:15.5px;color:#333333;transform:scaleY(1.12);transform-origin:0 13px;">Név:</span>
<div style="left:519px;top:603px;width:345px;height:18px;background:#f9f9f9;border:1px solid #a4a4a4"></div>
<span class="t" style="left:521px;top:606px;font-size:15.5px;color:#262626;transform:scaleY(1.12);transform-origin:0 13px;">Külszolgálat kifizetéskor levont adó</span>
<span class="t" style="left:766px;top:606px;font-size:15.5px;color:#262626;transform:scaleY(1.12);transform-origin:0 13px;">'16</span>
<span class="t" style="left:193px;top:628px;font-size:15.5px;color:#333333;transform:scaleY(1.12);transform-origin:0 13px;">Felvett napidíj:</span>
<div style="left:519px;top:625px;width:75px;height:18px;background:#f9f9f9;border:1px solid #a4a4a4"></div>
<span class="t" style="left:521px;top:628px;font-size:15.5px;color:#262626;transform:scaleY(1.12);transform-origin:0 13px;">J-5610</span>
<span class="t" style="left:193px;top:650px;font-size:15.5px;color:#333333;transform:scaleY(1.12);transform-origin:0 13px;">Név:</span>
<div style="left:519px;top:647px;width:345px;height:18px;background:#f9f9f9;border:1px solid #a4a4a4"></div>
<span class="t" style="left:521px;top:650px;font-size:15.5px;color:#262626;transform:scaleY(1.12);transform-origin:0 13px;">Külszolgálatra felvett napidíj</span>
<span class="t" style="left:740px;top:650px;font-size:15.5px;color:#262626;transform:scaleY(1.12);transform-origin:0 13px;">'16</span>
<div style="left:883px;top:651px;width:20px;height:20px;background:linear-gradient(#f6f6f6,#e6e6e6)"></div>
<svg style="left:886px;top:654px" width="14" height="14" viewBox="0 0 14 14"><path d="M1.5 9.5L5 12.5L12.5 1.5" fill="none" stroke="#4aa08a" stroke-width="1.9"/></svg>
<div style="left:1186px;top:62px;width:16px;height:694px;background:#cdcdcd"></div>
<div style="left:1186px;top:62px;width:16px;height:17px;background:#f0f0f0"></div>
<div style="left:1186px;top:733px;width:16px;height:23px;background:#f0f0f0"></div>
<svg style="left:1189px;top:66px" width="10" height="9" viewBox="0 0 10 9"><path d="M1 7.2L4.4 2.6L7.8 7.2" fill="none" stroke="#3c3c3c" stroke-width="2"/></svg>
<svg style="left:1189px;top:743px" width="10" height="9" viewBox="0 0 10 9"><path d="M1 2.2L4.4 6.8L7.8 2.2" fill="none" stroke="#3c3c3c" stroke-width="2"/></svg>
</body></html>
